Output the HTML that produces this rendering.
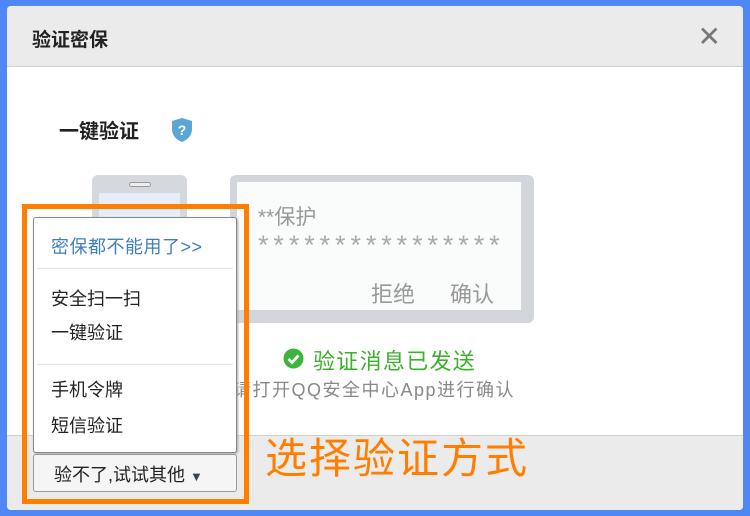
<!DOCTYPE html>
<html><head><meta charset="utf-8"><style>
*{margin:0;padding:0;box-sizing:border-box}
body{width:750px;height:516px;background:#4f87f5;position:relative;overflow:hidden;font-family:"Liberation Sans","Noto Sans CJK SC",sans-serif}
.dlg{position:absolute;left:7px;top:6px;width:736px;height:504px;background:#fff;border-radius:4px;overflow:hidden}
.hd{position:absolute;left:0;top:0;width:100%;height:61px;background:#ebebeb;border-bottom:1px solid #cfcfcf}
.hd span{position:absolute;left:25px;top:19px;font-size:19px;font-weight:bold;color:#222}
.x{position:absolute;right:22px;top:17px;font-size:28px;color:#777;line-height:28px}
.ft{position:absolute;left:0;top:429px;width:100%;height:80px;background:#ebebeb;border-top:1px solid #cfcfcf}
.a{position:absolute;white-space:nowrap}
</style></head><body>
<div class="dlg">
<div class="hd"><span>验证密保</span><div class="x">✕</div></div>
<div class="a" style="left:52px;top:109px;font-size:20px;font-weight:bold;color:#222">一键验证</div>
<svg class="a" style="left:164px;top:111px" width="22" height="26" viewBox="0 0 22 26"><path d="M11 1 L21 4 V12 C21 19 16 23 11 25 C6 23 1 19 1 12 V4 Z" fill="#5ba6d4"/><text x="11" y="18" font-size="14" font-weight="bold" fill="#fff" text-anchor="middle" font-family="Liberation Sans">?</text></svg>
<div class="a" style="left:85px;top:169px;width:95px;height:80px;background:#d5d9de;border-radius:6px"><div style="position:absolute;left:37px;top:7px;width:22px;height:5px;border:1px solid #999;border-radius:3px;background:#eee"></div><div style="position:absolute;left:7px;top:18px;width:81px;height:62px;background:#e6eefa"></div></div>
<div class="a" style="left:223px;top:169px;width:304px;height:148px;background:#d2d6da;border-radius:6px"><div style="position:absolute;left:7px;top:7px;width:284px;height:128px;background:#fafbfb"></div></div>
<div class="a" style="left:251px;top:195px;font-size:21px;color:#999">**保护</div>
<div class="a" style="left:251px;top:224px;font-size:27px;color:#aaa;letter-spacing:4.9px">****************</div>
<div class="a" style="left:364px;top:271px;font-size:22px;color:#999;word-spacing:0">拒绝<span style="display:inline-block;width:35px"></span>确认</div>
<svg class="a" style="left:276px;top:342px" width="21" height="21"><circle cx="10.5" cy="10.5" r="10" fill="#3db53d"/><path d="M5.5 11 L9 14.5 L15.5 7.5" stroke="#fff" stroke-width="2.8" fill="none"/></svg>
<div class="a" style="left:306px;top:338px;font-size:22px;color:#3daf2c;letter-spacing:1.3px">验证消息已发送</div>
<div class="a" style="left:226px;top:370px;font-size:18px;color:#888;letter-spacing:1.5px">请打开QQ安全中心App进行确认</div>
<div class="ft"></div>
<div class="a" style="left:258px;top:419px;font-size:42px;color:#ff7e00;letter-spacing:2px">选择验证方式</div>
</div>
<div class="a" style="left:22px;top:204px;width:227px;height:300px;border:5px solid #ff7e00"></div>
<div class="a" style="left:33px;top:217px;width:204px;height:236px;background:#fff;border:1px solid #888;border-radius:3px;box-shadow:1px 1px 2px #aaa">
<div style="position:absolute;left:17px;top:15px;font-size:18px;color:#3f7fc0;letter-spacing:0.5px">密保都不能用了&gt;&gt;</div>
<div style="position:absolute;left:3px;top:50px;width:196px;border-top:1px solid #e6e6e6"></div>
<div style="position:absolute;left:17px;top:64px;font-size:18px;color:#222;line-height:34px">安全扫一扫<br>一键验证</div>
<div style="position:absolute;left:3px;top:146px;width:196px;border-top:1px solid #e6e6e6"></div>
<div style="position:absolute;left:17px;top:154px;font-size:18px;color:#222;line-height:36px">手机令牌<br>短信验证</div>
</div>
<div class="a" style="left:33px;top:454px;width:204px;height:38px;background:#f5f5f5;border:1px solid #999;border-radius:3px;font-size:18px;color:#222;padding:6px 0 0 20px">验不了,试试其他 <span style="font-size:13px;color:#345">▼</span></div>
</body></html>
